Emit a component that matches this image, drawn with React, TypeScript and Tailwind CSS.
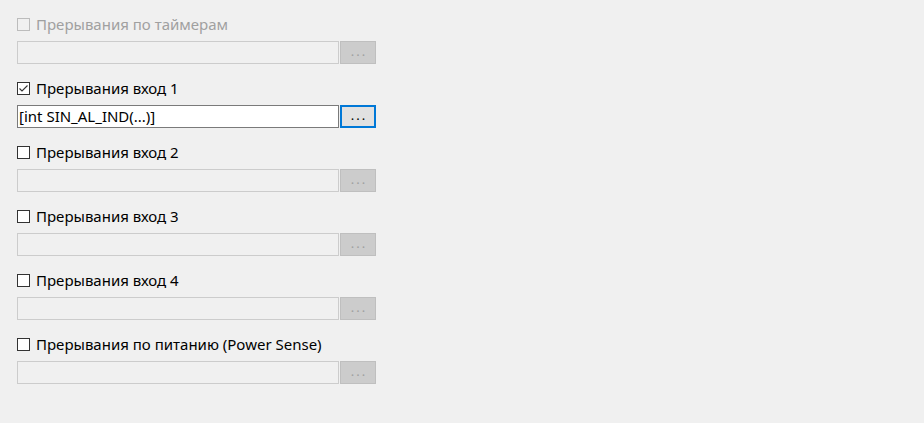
import React from "react";

const GROUPS = [
  { id: 1, label: "Прерывания по таймерам", enabled: false, checked: false, value: "" },
  { id: 2, label: "Прерывания вход 1", enabled: true, checked: true, value: "[int SIN_AL_IND(...)]" },
  { id: 3, label: "Прерывания вход 2", enabled: true, checked: false, value: "" },
  { id: 4, label: "Прерывания вход 3", enabled: true, checked: false, value: "" },
  { id: 5, label: "Прерывания вход 4", enabled: true, checked: false, value: "" },
  { id: 6, label: "Прерывания по питанию (Power Sense)", enabled: true, checked: false, value: "" },
];

const CheckBox = ({ checked, enabled }: { checked: boolean; enabled: boolean }) => (
  <div
    className={`w-[13px] h-[13px] shrink-0 border flex items-center justify-center ${
      enabled ? "border-[#333333] bg-white" : "border-[#bcbcbc] bg-[#f0f0f0]"
    }`}
  >
    {checked && (
      <svg width="11" height="11" viewBox="0 0 11 11">
        <path d="M1.5 5.5 L4 8 L9.5 2.5" fill="none" stroke="#333333" strokeWidth="1.1" />
      </svg>
    )}
  </div>
);

export default function App() {
  return (
    <div
      className="w-[924px] h-[423px] bg-[#f0f0f0] pt-[18px] pl-[17px] text-[15px]"
      style={{ fontFamily: '"Noto Sans", "Segoe UI", sans-serif' }}
    >
      {GROUPS.map((g) => {
        const active = g.checked;
        return (
          <div key={g.id} className="flex flex-col mb-[18px]">
            <div className="flex items-center h-[13px] gap-[6px]">
              <CheckBox checked={g.checked} enabled={g.enabled} />
              <span className={`leading-none whitespace-nowrap ${g.enabled ? "text-black" : "text-[#a0a0a0]"}`}>
                {g.label}
              </span>
            </div>
            <div className="flex mt-[10px] h-[23px]">
              <div
                className={`w-[322px] h-full border flex items-center px-[1px] ${
                  active ? "border-[#7a7a7a] bg-white text-black" : "border-[#cccccc] bg-[#f0f0f0]"
                }`}
              >
                {g.value}
              </div>
              <div
                className={`ml-[1px] w-[36px] h-full flex items-center justify-center ${
                  active
                    ? "border-2 border-[#0078d7] bg-[#e1e1e1] text-black"
                    : "border border-[#bfbfbf] bg-[#cccccc] text-[#a0a0a0]"
                }`}
              >
                <span className="leading-none pb-[3px] pl-[2px] tracking-[2px] text-[13px]">...</span>
              </div>
            </div>
          </div>
        );
      })}
    </div>
  );
}
